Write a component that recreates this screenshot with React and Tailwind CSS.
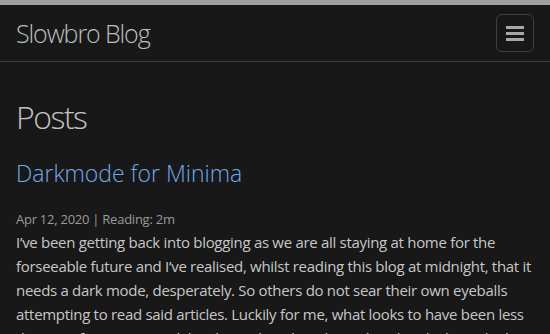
import React from 'react';

function App() {
  return (
    <div className="h-[334px] overflow-hidden bg-[#181818] text-[#c7c7c7]" style={{ fontFamily: '"Open Sans", "Noto Sans", sans-serif' }}>
      <div className="h-[5px] bg-[#a0a0a0]" />
      <header className="flex items-center justify-between h-[57px] px-4 border-b border-[#3d3d3d]">
        <a className="text-[25px] font-light tracking-[-1.1px] text-[#bdbdbd] leading-none">Slowbro Blog</a>
        <button className="flex flex-col items-center justify-center gap-[3px] w-[38px] h-[38px] rounded-[6px] border border-[#404040]">
          <span className="block w-[18px] h-[3px] bg-[#a8a8a8]" />
          <span className="block w-[18px] h-[3px] bg-[#a8a8a8]" />
          <span className="block w-[18px] h-[3px] bg-[#a8a8a8]" />
        </button>
      </header>
      <main className="px-4 pt-[35px]">
        <h1 className="text-[32px] font-light tracking-[-1.5px] leading-[40px] text-[#c2c2c2]">Posts</h1>
        <h2 className="mt-[20px] text-[23px] font-light leading-[32px] text-[#6fa9ea]">Darkmode for Minima</h2>
        <div className="mt-[21px] text-[13px] tracking-[-0.25px] leading-[18px] text-[#9a9a9a]">Apr 12, 2020 | Reading: 2m</div>
        <p className="mt-[2px] text-[15px] tracking-[-0.3px] leading-[24px]">
          I’ve been getting back into blogging as we are all staying at home for the forseeable future and I’ve realised, whilst reading this blog at midnight, that it needs a dark mode, desperately. So others do not sear their own eyeballs attempting to read said articles. Luckily for me, what looks to have been less than an afternoon’s work has been done by others already, which made this much easier.
        </p>
      </main>
    </div>
  );
}

export default App;
